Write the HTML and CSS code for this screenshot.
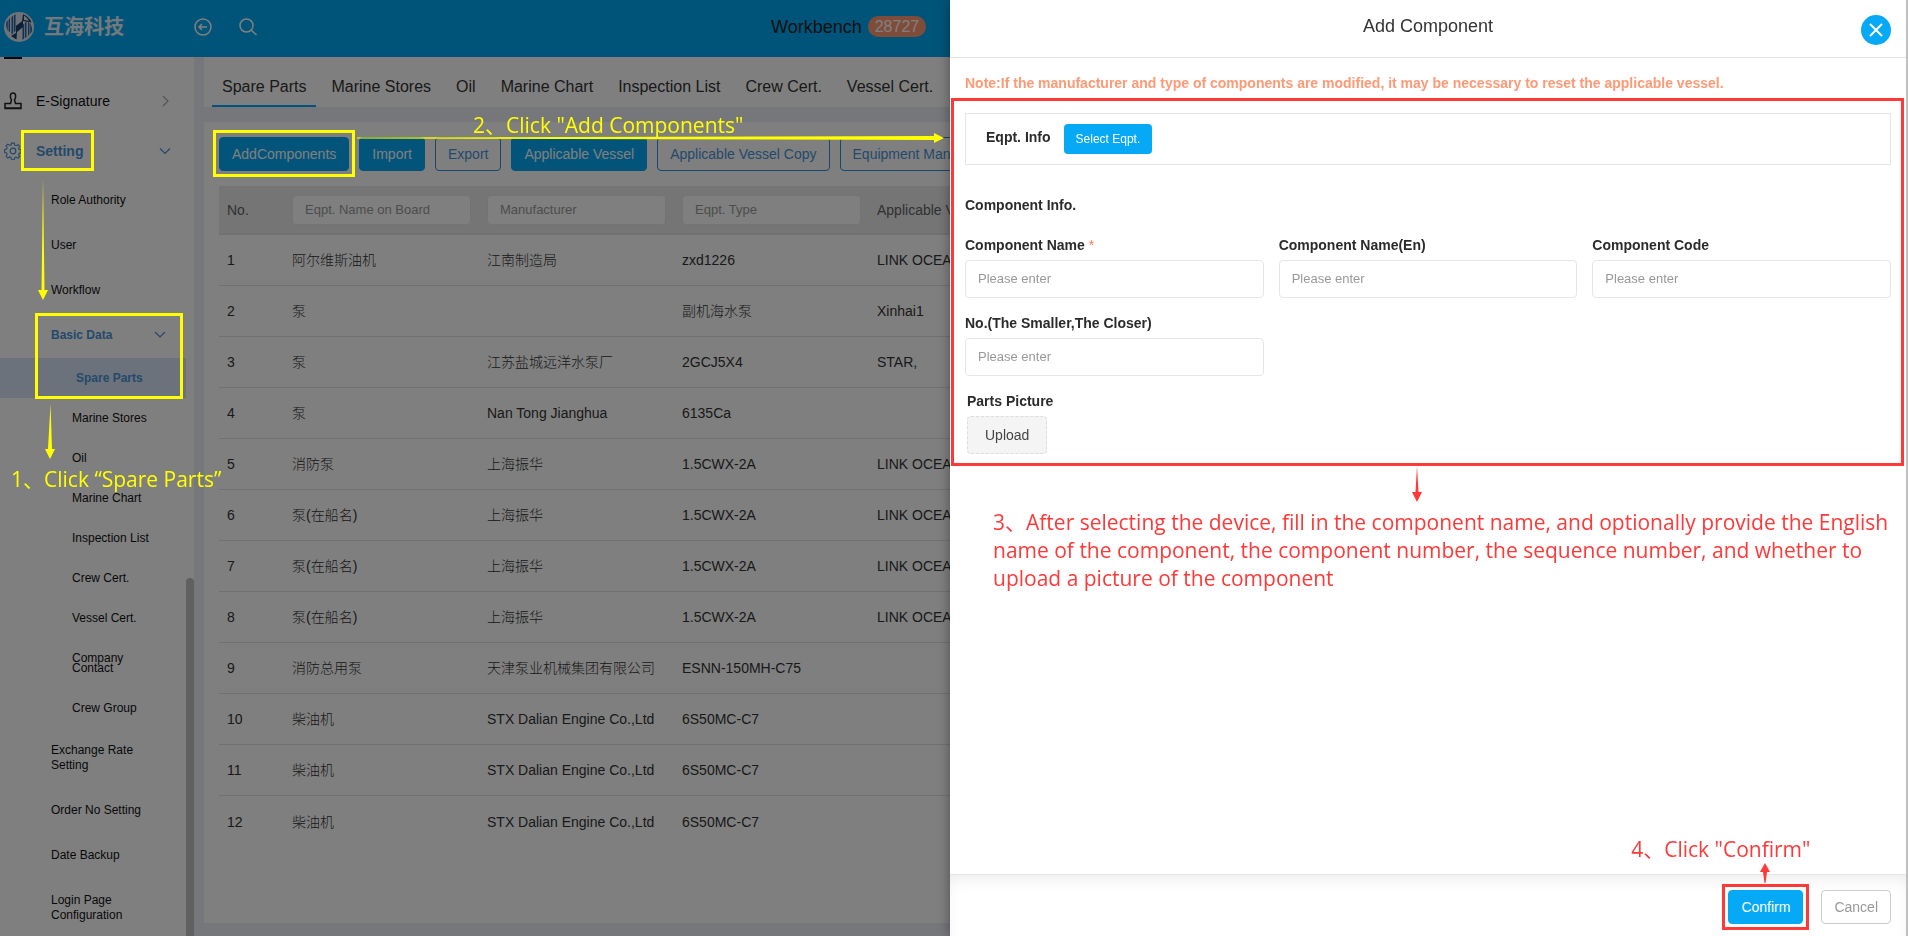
FILE: index.html
```html
<!DOCTYPE html>
<html lang="en">
<head>
<meta charset="utf-8">
<title>Add Component</title>
<link rel="stylesheet" href="styles.css">
</head>
<body>
<div class="app">
  <header class="topbar">
    <div class="brand">
      <svg class="brand-logo" viewBox="0 0 30 30" aria-hidden="true">
        <circle cx="15" cy="15" r="15" fill="#dfe6ee"/>
        <path d="M11.500 2.200V19l-4 3.500V5zM2.300 10L6 6v14l-2.500-1.500A13 13 0 0 1 2.300 10z" fill="#2460a4"/>
        <path d="M18.500 27.800V13l4-3.500V25zM27.700 20L24 24V10l2.500 1.500A13 13 0 0 1 27.700 20z" fill="#2460a4"/>
        <path d="M9.500 3v18M20.500 9v18M4.200 7v13M25.800 10v13" stroke="#dfe6ee" stroke-width=".8"/>
        <path d="M19 2.200l-1 7-6 4.500V21l-5 3 5.500 3.500L13 20l6-5V9l8.500 1.500A14 14 0 0 0 19 2.200z" fill="#17406f"/>
        <path d="M20 3.500V8l5 .8a14 14 0 0 0-5-5.300z" fill="#dfe6ee"/>
      </svg>
      <span class="brand-name">互海科技</span>
    </div>
    <button class="icon-btn" aria-label="Back">
      <svg width="18" height="18" viewBox="0 0 18 18"><circle cx="9" cy="9" r="8"/><path d="M13 9H5M8 6L5 9l3 3"/></svg>
    </button>
    <button class="icon-btn" aria-label="Search">
      <svg width="18" height="18" viewBox="0 0 18 18"><circle cx="7.5" cy="7.5" r="6.5"/><path d="M12 12l5.500 5"/></svg>
    </button>
    <a class="workbench" href="#">Workbench <span class="badge">28727</span></a>
  </header>

  <div class="layout">
    <nav class="sidebar">
      <ul class="menu">
        <li class="menu-clipped"><svg width="18" height="2" viewBox="0 0 18 2"><path d="M1 0v1h16V0"/></svg></li>
        <li class="menu-item">
          <svg class="menu-icon" viewBox="0 0 18 18"><path d="M1 11.500h5.500l1-3.500C6 6 5.500 1 9 1s3 5 1.500 7l1 3.500H17v5H1zM1 16h16"/></svg>
          <a href="#">E-Signature</a>
          <svg class="chev" viewBox="0 0 12 12"><path d="M4 1l5 5-5 5"/></svg>
        </li>
        <li class="menu-item open">
          <svg class="menu-icon" viewBox="0 0 18 18"><path d="M7.500 1h3l.5 2.200 1.500.6 2-1.200 1.900 1.900-1.200 2 .6 1.500 2.200.5v3l-2.200.5-.6 1.500 1.200 2-1.900 1.900-2-1.200-1.500.6-.5 2.200h-3L7 16.600l-1.500-.6-2 1.200-1.900-1.900 1.200-2-.6-1.500L0 11.300V8l2.200-.5.6-1.500-1.200-2 1.900-1.900 2 1.200L7 3.200z" transform="translate(.6 .2) scale(.92)"/><circle cx="9" cy="9" r="2.800"/></svg>
          <a href="#">Setting</a>
          <svg class="chev" viewBox="0 0 12 12"><path d="M1 3.500l5 5 5-5"/></svg>
        </li>
      </ul>
      <ul class="submenu">
        <li><a href="#">Role Authority</a></li>
        <li><a href="#">User</a></li>
        <li><a href="#">Workflow</a></li>
        <li class="open"><a href="#">Basic Data</a><svg class="chev" viewBox="0 0 12 12"><path d="M1 2l5 5 5-5"/></svg></li>
      </ul>
      <ul class="submenu leaf">
        <li class="current"><a href="#">Spare Parts</a></li>
        <li><a href="#">Marine Stores</a></li>
        <li><a href="#">Oil</a></li>
        <li><a href="#">Marine Chart</a></li>
        <li><a href="#">Inspection List</a></li>
        <li><a href="#">Crew Cert.</a></li>
        <li><a href="#">Vessel Cert.</a></li>
        <li><a href="#">Company Contact</a></li>
        <li><a href="#">Crew Group</a></li>
      </ul>
      <ul class="submenu">
        <li><a href="#">Exchange Rate Setting</a></li>
        <li><a href="#">Order No Setting</a></li>
        <li><a href="#">Date Backup</a></li>
        <li><a href="#">Login Page Configuration</a></li>
      </ul>
      <div class="scroll-thumb"></div>
    </nav>

    <main class="content">
      <nav class="tabs">
        <a class="tab active" href="#">Spare Parts</a>
        <a class="tab" href="#">Marine Stores</a>
        <a class="tab" href="#">Oil</a>
        <a class="tab" href="#">Marine Chart</a>
        <a class="tab" href="#">Inspection List</a>
        <a class="tab" href="#">Crew Cert.</a>
        <a class="tab" href="#">Vessel Cert.</a>
      </nav>
      <section class="card">
        <div class="toolbar">
          <button class="btn primary">AddComponents</button>
          <button class="btn primary">Import</button>
          <button class="btn outline">Export</button>
          <button class="btn primary">Applicable Vessel</button>
          <button class="btn outline">Applicable Vessel Copy</button>
          <button class="btn outline">Equipment Manufacturer</button>
        </div>
        <table class="grid">
          <colgroup><col class="col-no"><col class="col-field"><col class="col-field"><col class="col-field"><col></colgroup>
          <thead>
            <tr>
              <th>No.</th>
              <th><input aria-label="Eqpt. Name on Board" placeholder="Eqpt. Name on Board"></th>
              <th><input aria-label="Manufacturer" placeholder="Manufacturer"></th>
              <th><input aria-label="Eqpt. Type" placeholder="Eqpt. Type"></th>
              <th>Applicable Vessel</th>
            </tr>
          </thead>
          <tbody>
            <tr><td>1</td><td>阿尔维斯油机</td><td>江南制造局</td><td>zxd1226</td><td>LINK OCEAN</td></tr>
            <tr><td>2</td><td>泵</td><td></td><td>副机海水泵</td><td>Xinhai1</td></tr>
            <tr><td>3</td><td>泵</td><td>江苏盐城远洋水泵厂</td><td>2GCJ5X4</td><td>STAR,</td></tr>
            <tr><td>4</td><td>泵</td><td>Nan Tong Jianghua</td><td>6135Ca</td><td></td></tr>
            <tr><td>5</td><td>消防泵</td><td>上海振华</td><td>1.5CWX-2A</td><td>LINK OCEAN</td></tr>
            <tr><td>6</td><td>泵(在船名)</td><td>上海振华</td><td>1.5CWX-2A</td><td>LINK OCEAN</td></tr>
            <tr><td>7</td><td>泵(在船名)</td><td>上海振华</td><td>1.5CWX-2A</td><td>LINK OCEAN</td></tr>
            <tr><td>8</td><td>泵(在船名)</td><td>上海振华</td><td>1.5CWX-2A</td><td>LINK OCEAN</td></tr>
            <tr><td>9</td><td>消防总用泵</td><td>天津泵业机械集团有限公司</td><td>ESNN-150MH-C75</td><td></td></tr>
            <tr><td>10</td><td>柴油机</td><td>STX Dalian Engine Co.,Ltd</td><td>6S50MC-C7</td><td></td></tr>
            <tr><td>11</td><td>柴油机</td><td>STX Dalian Engine Co.,Ltd</td><td>6S50MC-C7</td><td></td></tr>
            <tr><td>12</td><td>柴油机</td><td>STX Dalian Engine Co.,Ltd</td><td>6S50MC-C7</td><td></td></tr>
          </tbody>
        </table>
      </section>
    </main>
  </div>
</div>

<div class="mask"></div>

<aside class="drawer" role="dialog" aria-labelledby="drawer-title">
  <header class="drawer-head">
    <h1 id="drawer-title">Add Component</h1>
    <button class="close" aria-label="Close"><svg width="14" height="14" viewBox="0 0 14 14"><path d="M1 1l12 12M13 1L1 13"/></svg></button>
  </header>
  <div class="drawer-body">
    <p class="note">Note:If the manufacturer and type of components are modified, it may be necessary to reset the applicable vessel.</p>
    <form class="region">
      <div class="eqpt"><span class="label">Eqpt. Info</span><button type="button" class="btn-small">Select Eqpt.</button></div>
      <h2 class="section-title">Component Info.</h2>
      <div class="fields">
        <div class="field"><label for="name">Component Name <span class="req">*</span></label><input id="name" placeholder="Please enter"></div>
        <div class="field"><label for="name-en">Component Name(En)</label><input id="name-en" placeholder="Please enter"></div>
        <div class="field"><label for="code">Component Code</label><input id="code" placeholder="Please enter"></div>
        <div class="field"><label for="order">No.(The Smaller,The Closer)</label><input id="order" placeholder="Please enter"></div>
      </div>
      <div class="field picture"><span class="label" id="pic">Parts Picture</span><button type="button" class="upload" aria-describedby="pic">Upload</button></div>
    </form>
    <svg class="step-arrow" width="10" height="36" viewBox="0 0 10 36"><path d="M5 0l1.500 26H10L5 36 0 26h3.500z"/></svg>
    <p class="step step-three">3、After selecting the device, fill in the component name, and optionally provide the English<br>name of the component, the component number, the sequence number, and whether to<br>upload a picture of the component</p>
  </div>
  <footer class="drawer-foot">
    <div class="confirm-mark">
      <button class="btn primary">Confirm</button>
      <div class="step step-four">4、Click "Confirm"</div>
      <svg class="up-arrow" width="10" height="20" viewBox="0 0 10 20"><path d="M5 0l5 9H7L5.500 20h-1L3 9H0z"/></svg>
    </div>
    <button class="btn cancel">Cancel</button>
  </footer>
</aside>

<div class="notes">
  <div class="mark mark-setting"></div>
  <div class="mark mark-basic"></div>
  <div class="mark mark-add"></div>
  <svg class="arrow arrow-a" width="10" height="122" viewBox="0 0 10 122"><path d="M5 0l1.500 112H10L5 122 0 112h3.500z"/></svg>
  <svg class="arrow arrow-b" width="10" height="55" viewBox="0 0 10 55"><path d="M5.500 0L7 45h3L5 55 0 45h3z"/></svg>
  <svg class="arrow arrow-c" width="587" height="10" viewBox="0 0 587 10"><path d="M0 4.500L577 3V0l10 5-10 5V7L0 5.500z"/></svg>
  <div class="step step-one">1、Click “Spare Parts”</div>
  <div class="step step-two">2、Click "Add Components"</div>
</div>
</body>
</html>
```
FILE: styles.css
```css
* { box-sizing: border-box; }
body {
  margin: 0;
  font: 14px/20px "Liberation Sans", "Noto Sans CJK SC", sans-serif;
  color: #333;
  background: #ebeef5;
}
ul, h1, h2, p { margin: 0; padding: 0; list-style: none; font-weight: normal; }
a { color: inherit; text-decoration: none; }
button, input { font-family: inherit; margin: 0; }

.app { display: flex; flex-direction: column; height: 100vh; overflow: hidden; }

/* top bar */
.topbar {
  display: flex; flex: none; align-items: center;
  height: 57px; padding: 0 4px 4px;
  background: #00a9f4;
}
.brand { display: flex; align-items: center; gap: 10px; width: 190px; }
.brand-logo { width: 30px; height: 30px; }
.brand-name { font-size: 20px; font-weight: 700; color: #eaf3f8; }
.icon-btn { display: flex; padding: 0; border: 0; background: none; margin-right: 27px; }
.icon-btn svg { fill: none; stroke: #fff; stroke-width: 1.500; }
.workbench { margin-left: 487px; font-size: 18px; color: #222; display: flex; align-items: center; gap: 6px; }
.badge { padding: 0 7px; border-radius: 11px; font-size: 16px; line-height: 21px; color: #fff; background: #ff9975; }

.layout { display: flex; flex: 1; min-height: 0; }

/* sidebar */
.sidebar { position: relative; flex: none; width: 194px; overflow: hidden; background: #fff; color: #111; }
.menu { padding-bottom: 2px; }
.menu-clipped { height: 19px; padding-left: 4px; }
.menu-clipped svg { display: block; fill: none; stroke: #111; stroke-width: 2; }
.menu-item { display: flex; align-items: center; height: 50px; padding: 0 23px 0 4px; }
.menu-item a { flex: 1; margin-left: 14px; }
.menu-icon { width: 18px; height: 18px; fill: none; stroke: #222; stroke-width: 1.500; }
.chev { width: 12px; height: 12px; fill: none; stroke: #aaa; stroke-width: 1.200; }
.open { color: #4a92d6; }
.open a { font-weight: 700; }
.open .menu-icon, .open .chev { stroke: #4a8fd0; stroke-width: 1.200; }
.submenu { font-size: 12px; line-height: 15px; }
.submenu li { display: flex; align-items: center; padding: 15px 28px 15px 51px; }
.submenu a { flex: 1; }
.submenu.leaf { line-height: 10px; }
.submenu.leaf li { padding: 15px 36px 15px 72px; }
.submenu.leaf .current { margin-right: 8px; padding: 15px 20px 15px 76px; background: #d9e5f8; color: #4a92d6; font-weight: 700; }
.scroll-thumb { position: absolute; right: 0; top: 521px; bottom: 0; width: 8px; border-radius: 4px 4px 0 0; background: #c0c0c0; }

/* content */
.content { display: flex; flex: 1; flex-direction: column; min-width: 0; padding: 0 15px 13px 10px; }
.tabs { display: flex; gap: 5px; height: 50px; padding: 0 8px; background: #fff; }
.tab { padding: 12px 10px 0; border-bottom: 2px solid transparent; font-size: 16px; line-height: 36px; white-space: nowrap; }
.tab.active { border-color: #00a9f4; }
.card { flex: 1; margin-top: 15px; padding: 15px; background: #fff; }
.toolbar { display: flex; gap: 10px; margin-bottom: 15px; }
.btn { height: 34px; padding: 0 12px; border: 1px solid #00a9f4; border-radius: 4px; font-size: 14px; white-space: nowrap; }
.btn.primary { background: #05a9f5; color: #fff; }
.btn.outline { background: #fff; color: #4a92d6; border-color: #2d8fd8; }

.grid { width: 100%; border-collapse: separate; border-spacing: 0; table-layout: fixed; }
.col-no { width: 65px; }
.col-field { width: 195px; }
.grid th { height: 49px; padding: 0 8px; background: #ebebeb; border-bottom: 2px solid #e2e2e2; color: #606266; font-weight: 400; text-align: left; }
.grid td { height: 51px; padding: 0 8px; border-bottom: 1px solid #e2e2e2; font-weight: 300; white-space: nowrap; }
.grid tr:last-child td { border-bottom: 0; }
.grid input { display: block; width: 100%; height: 30px; padding: 0 12px; border: 1px solid #e6e6e6; border-radius: 4px; background: #fff; font-size: 13px; }
.grid input::placeholder { color: #999; }

.mask { position: fixed; inset: 0; background: rgba(0, 0, 0, .5); }

/* drawer */
.drawer {
  position: fixed; top: 0; right: 0; bottom: 0; width: calc(50% + 4px);
  display: flex; flex-direction: column;
  border-right: 2px solid #c0c0c0; background: #fff; box-shadow: 0 0 12px rgba(0, 0, 0, .4);
}
.drawer-head { display: flex; flex: none; align-items: flex-start; height: 58px; padding: 15px 15px 0 45px; border-bottom: 1px solid #e5e5e5; }
.drawer-head h1 { flex: 1; font-size: 18px; line-height: 22px; text-align: center; }
.close { display: flex; align-items: center; justify-content: center; width: 30px; height: 30px; padding: 0; border: 0; border-radius: 50%; background: #05a9f5; }
.close svg { fill: none; stroke: #fff; stroke-width: 2; }
.drawer-body { flex: 1; padding: 15px 2px 0 1px; }
.note { margin: 0 14px 5px; font-weight: 700; color: #ff9975; }
.region { padding: 12px 10px 9px 11px; border: 3px solid #ff3838; }
.label, .field label, .section-title { font-size: 14px; font-weight: 700; color: #2b2b2b; }
.eqpt { display: flex; gap: 13px; height: 52px; padding: 10px 20px; border: 1px solid #e5e5e5; }
.eqpt .label { line-height: 26px; }
.btn-small { height: 30px; padding: 0 12px; border: 0; border-radius: 4px; background: #05a9f5; color: #fff; font-size: 12px; }
.section-title { margin: 30px 0 20px; }
.fields { display: grid; grid-template-columns: repeat(3, 1fr); gap: 15px; }
.field { display: flex; flex-direction: column; align-items: flex-start; gap: 5px; }
.req { color: #ff7a55; font-weight: 400; }
.field input { width: 100%; height: 38px; padding: 0 12px 2px; border: 1px solid #e6e6e6; border-radius: 4px; font-size: 13px; }
.field input::placeholder { color: #999; }
.picture { margin: 15px 2px 0; }
.upload { height: 38px; padding: 0 17px; border: 1px dashed #ddd; border-radius: 4px; background: #f4f4f4; color: #444; font-size: 14px; }
.step-arrow { display: block; margin: 0 0 0 461px; fill: #ff3838; }
.drawer-foot {
  display: flex; flex: none; justify-content: flex-end; gap: 12px; height: 62px; padding: 9px 15px 6px;
  border-top: 1px solid #e5e5e5; box-shadow: inset 0 8px 16px -4px rgba(0, 0, 0, .08);
}
.confirm-mark { position: relative; height: 46px; padding: 3px; border: 3px solid #ff3838; }
.confirm-mark .btn { display: block; width: 75px; }
.btn.cancel { margin-top: 6px; border-color: #ccc; background: #fff; color: #999; }

/* walkthrough notes */
.step { font: 21px/28px "Open Sans", "Noto Sans CJK SC", sans-serif; white-space: nowrap; color: #ff3838; }
.step-three { margin: 6px 0 0 42px; }
.step-four { position: absolute; right: -4px; bottom: 64px; }
.up-arrow { position: absolute; left: 35px; bottom: 44px; fill: #ff3838; }
.mark, .arrow, .step-one, .step-two { position: absolute; }
.mark { border: 3px solid #ff0; }
.arrow { fill: #ff0; }
.step-one, .step-two { color: #ff0; }
.mark-setting { left: 21px; top: 130px; width: 73px; height: 41px; }
.mark-basic { left: 35px; top: 313px; width: 148px; height: 86px; }
.mark-add { left: 213px; top: 130px; width: 142px; height: 47px; }
.arrow-a { left: 38px; top: 178px; }
.arrow-b { left: 45px; top: 404px; }
.arrow-c { left: 357px; top: 133px; }
.step-one { left: 11px; top: 465px; }
.step-two { left: 473px; top: 111px; }
```
